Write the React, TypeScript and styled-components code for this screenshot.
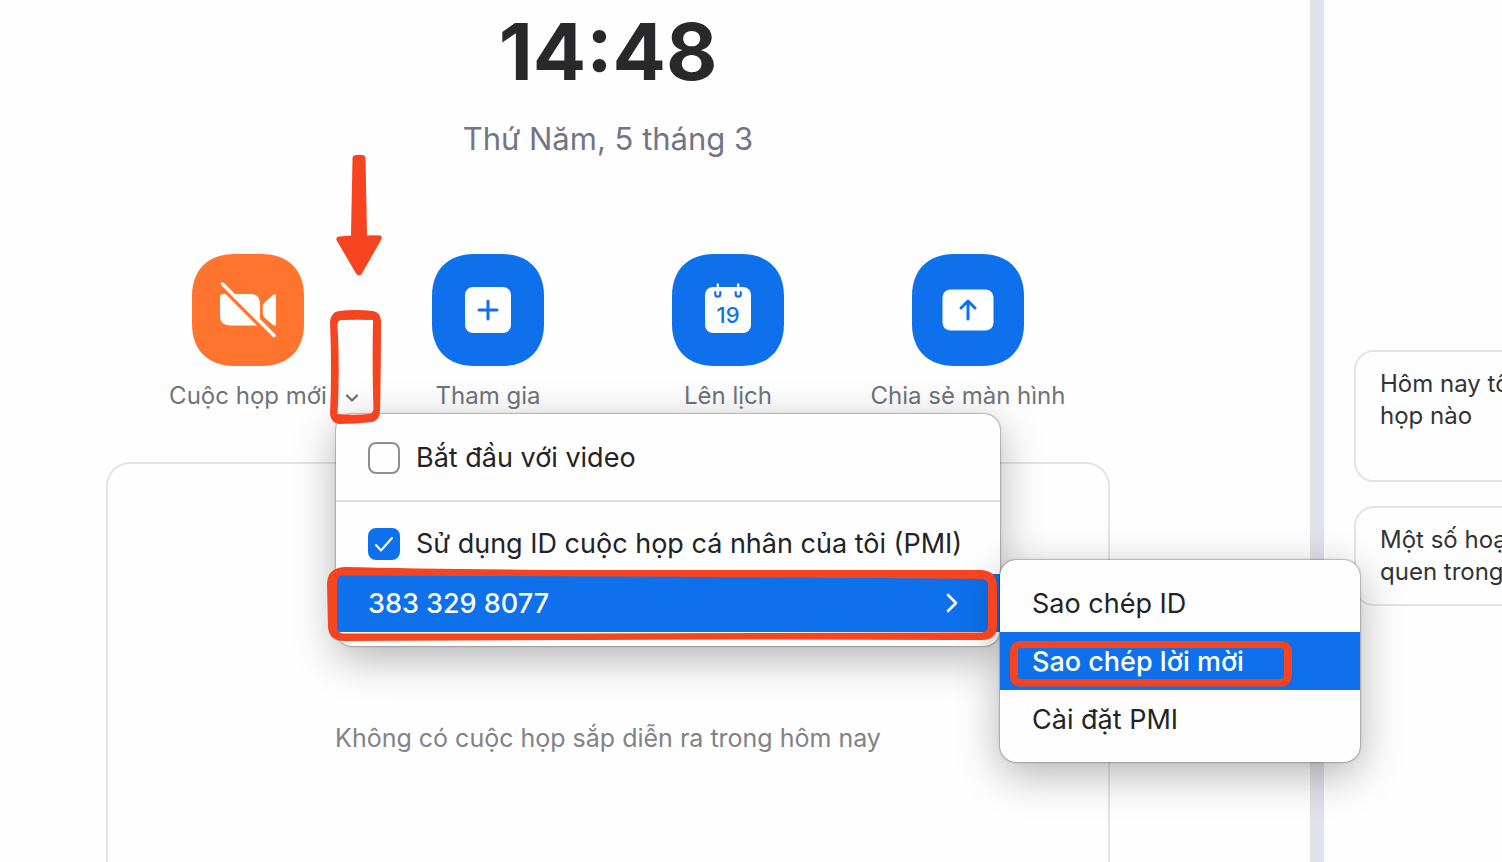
import React, { useState } from "react";
import styled, { createGlobalStyle } from "styled-components";

const blue = "#0e71eb";
const orange = "#ff742e";
const marker = "#f64420";

const GlobalStyle = createGlobalStyle`
  *, *::before, *::after { box-sizing: border-box; }
  body {
    margin: 0;
    background: #fefefe;
    color: #232333;
    font-family: Inter, "Liberation Sans", sans-serif;
    overflow: hidden;
  }
  button, input { font: inherit; }
`;

const Page = styled.div`
  display: flex;
  min-height: 100vh;
`;

const Main = styled.main`
  flex: 1;
  min-width: 0;
  display: flex;
  flex-direction: column;
  padding: 0 200px 0 106px;
  border-right: 14px solid #dfe2e8;
`;

const Clock = styled.h1`
  margin: 0;
  font-size: 79px;
  line-height: 102px;
  font-weight: 700;
  text-align: center;
  color: #29292b;
`;

const DateLine = styled.p`
  margin: 17px 0 0;
  font-size: 31px;
  line-height: 40px;
  text-align: center;
  color: #747487;
`;

const Actions = styled.div`
  display: grid;
  grid-template-columns: repeat(4, 240px);
  justify-content: center;
  margin-top: 95px;
`;

const Action = styled.div`
  position: relative;
  display: grid;
  grid-template-columns: 1fr auto 1fr;
  row-gap: 14px;
`;

const Tile = styled.button`
  grid-column: 1 / -1;
  justify-self: center;
  width: 112px;
  height: 112px;
  padding: 0;
  border: 0;
  background: none;
  cursor: pointer;

  svg { display: block; }
`;

const Label = styled.span`
  grid-column: 2;
  font-size: 24px;
  line-height: 32px;
  white-space: nowrap;
  color: #6e737c;
`;

const MenuToggle = styled.button`
  justify-self: start;
  display: flex;
  align-items: center;
  padding: 4px 0 0 17px;
  border: 0;
  background: none;
  color: #6e737c;
  cursor: pointer;
`;

const Panel = styled.div`
  position: absolute;
  z-index: 2;
  border-radius: 16px;
  background: #fefefe;
  box-shadow: 0 0 2px rgba(0, 0, 0, 0.75), 0 12px 44px rgba(0, 0, 0, 0.3);
`;

const Menu = styled(Panel)`
  top: 160px;
  left: 208px;
  width: 664px;
  padding: 15px 0 14px;
`;

const Submenu = styled(Panel)`
  top: -14px;
  left: 100%;
  width: 360px;
  padding: 14px 0;
`;

const Separator = styled.hr`
  height: 2px;
  margin: 13px 0;
  border: 0;
  background: #dedee0;
`;

const CheckRow = styled.label`
  display: flex;
  align-items: center;
  gap: 16px;
  height: 58px;
  margin-bottom: 1px;
  padding: 0 32px;
  font-size: 27px;
  line-height: 58px;
  white-space: nowrap;
  color: #232325;
`;

const CheckSlot = styled.span`
  display: grid;
  width: 32px;
  height: 32px;

  > * { grid-area: 1 / 1; }
  svg { pointer-events: none; }
`;

const CheckInput = styled.input`
  appearance: none;
  width: 32px;
  height: 32px;
  margin: 0;
  border: 2px solid #8f8f93;
  border-radius: 8px;
  background: #fefefe;

  &:checked {
    border-color: ${blue};
    background: ${blue};
  }
`;

const ItemSlot = styled.div`
  position: relative;
`;

const Item = styled.button<{ $active?: boolean }>`
  display: flex;
  align-items: center;
  justify-content: space-between;
  width: 100%;
  height: 58px;
  padding: 2px 32px 0;
  border: 0;
  font-size: 27px;
  font-weight: ${(p) => (p.$active ? 500 : 400)};
  line-height: 56px;
  text-align: left;
  white-space: nowrap;
  color: ${(p) => (p.$active ? "#fff" : "#232325")};
  background: ${(p) => (p.$active ? blue : "transparent")};
`;

const Mark = styled.svg<{ $top: number; $left: number }>`
  position: absolute;
  z-index: 3;
  top: ${(p) => p.$top}px;
  left: ${(p) => p.$left}px;
  fill: ${marker};
  fill-rule: evenodd;
  pointer-events: none;
`;

const Upcoming = styled.section`
  flex: 1;
  margin-top: 50px;
  padding: 258px 24px 40px;
  border: 2px solid #e4e4e6;
  border-bottom: 0;
  border-radius: 24px 24px 0 0;
  font-size: 25px;
  line-height: 32px;
  text-align: center;
  color: #828287;
`;

const Side = styled.aside`
  display: flex;
  flex-direction: column;
  gap: 24px;
  width: 178px;
  padding: 350px 0 0 30px;
  overflow: hidden;
`;

const Note = styled.article<{ $tall?: boolean }>`
  width: 360px;
  padding: 16px 24px ${(p) => (p.$tall ? 48 : 16)}px;
  border: 2px solid #e4e4e6;
  border-radius: 20px;
  font-size: 24px;
  line-height: 32px;
  white-space: nowrap;
  color: #333336;
`;

function TileShape({ color, children }: { color: string; children: React.ReactNode }) {
  return (
    <svg width="112" height="112" viewBox="0 0 112 112" aria-hidden="true">
      <path
        fill={color}
        d="M0 42C0 16 16 0 42 0H70C96 0 112 16 112 42V70C112 96 96 112 70 112H42C16 112 0 96 0 70Z"
      />
      {children}
    </svg>
  );
}

function VideoOff() {
  return (
    <TileShape color={orange}>
      <path
        fill="#fff"
        d="M28 43Q28 40 31 40H58Q68 40 68 50V68.500Q68 71.500 65 71.500H38Q28 71.500 28 61Z"
      />
      <path fill="#fff" d="M70.800 52Q71 50 73 48L81 41Q84 39 84 42V70Q84 73 81 71L73 64Q71 62 70.800 60Z" />
      <path d="M28 32L80 84" stroke={orange} strokeWidth="3.600" />
      <path d="M30.500 30L82 81.500" stroke="#fff" strokeWidth="3.400" strokeLinecap="round" />
    </TileShape>
  );
}

function Plus() {
  return (
    <TileShape color={blue}>
      <rect x="33" y="33" width="46" height="46" rx="8" fill="#fff" />
      <path d="M56 47V65M47 56H65" stroke={blue} strokeWidth="3" strokeLinecap="round" />
    </TileShape>
  );
}

function CalendarDay() {
  return (
    <TileShape color={blue}>
      <rect x="33" y="33" width="46" height="46" rx="8" fill="#fff" />
      <path
        d="M43.300 38V40.200A2.500 2.500 0 0 0 48.300 40.200V38M63.700 38V40.200A2.500 2.500 0 0 0 68.700 40.200V38"
        fill="none"
        stroke={blue}
        strokeWidth="2.200"
        strokeLinecap="round"
      />
      <path d="M45.800 30.500V39.500M66.200 30.500V39.500" stroke="#fff" strokeWidth="2.400" strokeLinecap="round" />
      <text x="56" y="69" fontSize="22" fontWeight="500" textAnchor="middle" fill={blue}>
        19
      </text>
    </TileShape>
  );
}

function ShareUp() {
  return (
    <TileShape color={blue}>
      <rect x="30.500" y="35.500" width="51" height="41" rx="8" fill="#fff" />
      <path
        d="M56 65V48M49 54L56 47L63 54"
        fill="none"
        stroke={blue}
        strokeWidth="3"
        strokeLinecap="round"
        strokeLinejoin="round"
      />
    </TileShape>
  );
}

function CheckField({ text, initial }: { text: string; initial: boolean }) {
  const [on, setOn] = useState(initial);
  return (
    <CheckRow>
      <CheckSlot>
        <CheckInput type="checkbox" checked={on} onChange={() => setOn(!on)} />
        {on && (
          <svg width="32" height="32" viewBox="0 0 32 32" fill="none" aria-hidden="true">
            <path d="M8 17L13 22.500L24 10" stroke="#fff" strokeWidth="2" strokeLinecap="round" strokeLinejoin="round" />
          </svg>
        )}
      </CheckSlot>
      {text}
    </CheckRow>
  );
}

export default function App() {
  return (
    <>
      <GlobalStyle />
      <Page>
        <Main>
          <Clock>14:48</Clock>
          <DateLine>Thứ Năm, 5 tháng 3</DateLine>
          <Actions>
            <Action>
              <Tile aria-label="Cuộc họp mới">
                <VideoOff />
              </Tile>
              <Label>Cuộc họp mới</Label>
              <MenuToggle aria-label="Tùy chọn cuộc họp">
                <svg width="16" height="10" viewBox="0 0 16 10" fill="none">
                  <path d="M3 2.500L8 7.500L13 2.500" stroke="currentColor" strokeWidth="2.400" strokeLinecap="round" strokeLinejoin="round" />
                </svg>
              </MenuToggle>
              <Menu>
                <CheckField text="Bắt đầu với video" initial={false} />
                <Separator />
                <CheckField text="Sử dụng ID cuộc họp cá nhân của tôi (PMI)" initial />
                <ItemSlot>
                  <Item $active>
                    383 329 8077
                    <svg width="32" height="24" viewBox="0 0 32 24" fill="none" aria-hidden="true">
                      <path d="M12 3L20 11L12 19" stroke="#fff" strokeWidth="2.600" strokeLinecap="round" strokeLinejoin="round" />
                    </svg>
                  </Item>
                  <Mark $top={-7} $left={-9} width="672" height="75" viewBox="0 0 672 75">
                    <path d="M17 0Q100 2 250 3H653Q669 3 670 18V60Q669 73 655 73Q400 72 240 73L17 74Q2 74 1 60L0 16Q1 1 17 0ZM15 8.500Q10 9 10 14V59Q10 66 16 66.500L240 66.500L655 65.500Q661 65 661 58V18Q661 12 654 12Q400 9.500 15 8.500Z" />
                  </Mark>
                  <Submenu>
                    <Item>Sao chép ID</Item>
                    <ItemSlot>
                      <Item $active>Sao chép lời mời</Item>
                      <Mark $top={9} $left={10} width="283" height="46" viewBox="0 0 283 46">
                        <path d="M10 0H270Q281 0 282 11V34Q281 45 272 45.500H10Q1 45 0 36V10Q1 1 10 0ZM10 7Q8 7 8 10V35Q8 38 11 38H270Q274 38 274 34V11Q274 7 270 7Z" />
                      </Mark>
                    </ItemSlot>
                    <Item>Cài đặt PMI</Item>
                  </Submenu>
                </ItemSlot>
              </Menu>
              <Mark $top={-99} $left={208} width="46" height="122" viewBox="0 0 46 122">
                <path d="M16.500 3Q17 0 20 0H26Q29 0 29.500 3L31 80.500Q38 80 44 80.500Q47 81.500 45 85L26 118.500Q23 122.500 20 118.500L1 86Q-1 82 3 81.500L15 80.500Z" />
              </Mark>
              <Mark $top={56} $left={202} width="51" height="115" viewBox="0 0 51 115">
                <path d="M9 1Q25 -1 43 1Q50 2 51 10Q51 60 50 101Q50 110 42 112Q26 114 9 114Q1 113 0 104Q2 60 0 12Q1 2 9 1ZM13 10Q7 10 7.500 15Q10 60 7.500 104Q24 105.500 38 104Q43 104 43.500 99Q42 60 43 10Q26 9.500 13 10Z" />
              </Mark>
            </Action>
            <Action>
              <Tile aria-label="Tham gia">
                <Plus />
              </Tile>
              <Label>Tham gia</Label>
            </Action>
            <Action>
              <Tile aria-label="Lên lịch">
                <CalendarDay />
              </Tile>
              <Label>Lên lịch</Label>
            </Action>
            <Action>
              <Tile aria-label="Chia sẻ màn hình">
                <ShareUp />
              </Tile>
              <Label>Chia sẻ màn hình</Label>
            </Action>
          </Actions>
          <Upcoming>Không có cuộc họp sắp diễn ra trong hôm nay</Upcoming>
        </Main>
        <Side>
          <Note $tall>
            Hôm nay tôi
            <br />
            họp nào
          </Note>
          <Note>
            Một số hoạt
            <br />
            quen trong
          </Note>
        </Side>
      </Page>
    </>
  );
}
